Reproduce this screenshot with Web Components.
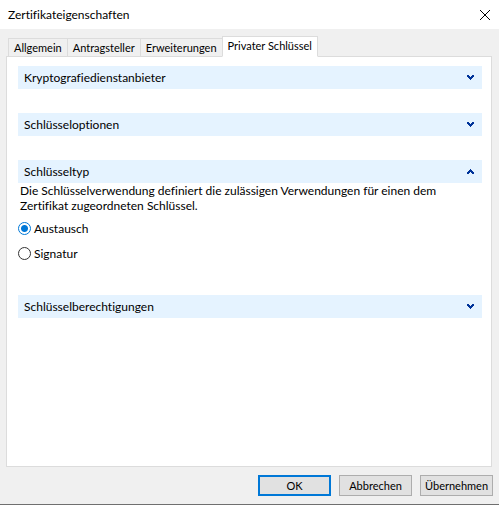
<!DOCTYPE html>
<html lang="de">
<head>
<meta charset="utf-8">
<title>Zertifikateigenschaften</title>
<style>
    html, body {
        height: 100%;
        margin: 0;
    }
    body {
        color: #000;
        box-sizing: border-box;
        padding-bottom: 1px;
        font: 12px/15px Lato, "Open Sans", sans-serif;
        font-variant-ligatures: none;
    }
</style>
</head>
<body>

<x-dialog heading="Zertifikateigenschaften">
    <x-tabs>
        <x-tab>Allgemein</x-tab>
        <x-tab>Antragsteller</x-tab>
        <x-tab>Erweiterungen</x-tab>
        <x-tab selected>Privater Schlüssel</x-tab>
        <x-section slot="panel" heading="Kryptografiedienstanbieter"></x-section>
        <x-section slot="panel" heading="Schlüsseloptionen"></x-section>
        <x-section slot="panel" heading="Schlüsseltyp" open>
            <x-key-type></x-key-type>
        </x-section>
        <x-section slot="panel" heading="Schlüsselberechtigungen"></x-section>
    </x-tabs>
    <x-button slot="actions" primary>OK</x-button>
    <x-button slot="actions">Abbrechen</x-button>
    <x-button slot="actions">Übernehmen</x-button>
</x-dialog>

<script>
class XDialog extends HTMLElement {

    #shadow = /*html*/ `
    <style>
        :host {
            height: 100%;
            display: flex;
            box-sizing: border-box;
            flex-direction: column;
            background: #f0f0f0;
            border-bottom: 1px solid #6f6f6f;
        }
        header {
            display: flex;
            height: 29px;
            flex: none;
            padding: 0 8px;
            background: #fff;
            align-items: center;
            justify-content: space-between;
        }
        h1 {
            margin: 0;
            font-size: inherit;
            font-weight: inherit;
        }
        header button {
            width: 12px;
            height: 12px;
            padding: 0;
            border: 0;
            display: flex;
            align-items: center;
            justify-content: center;
            background: none;
        }
        main {
            flex: 1;
            display: flex;
            min-height: 0;
            padding: 7px 7px 0 6px;
        }
        footer {
            display: flex;
            gap: 8px;
            padding: 8px 6px;
            justify-content: flex-end;
        }
    </style>
    <header>
        <h1></h1>
        <button type="button" aria-label="Schließen">
            <svg width="12" height="12" viewBox="0 0 12 12" fill="none" stroke="#000">
                <path d="M1 1l10 10M11 1L1 11"/>
            </svg>
        </button>
    </header>
    <main><slot></slot></main>
    <footer><slot name="actions"></slot></footer>
    `;

    constructor() {
        super();
        this.attachShadow({ mode: 'open' });
        this.shadowRoot.innerHTML = this.#shadow;
    }

    connectedCallback() {
        this.shadowRoot.querySelector('h1').textContent = this.getAttribute('heading');
    }

}

class XTabs extends HTMLElement {

    #shadow = /*html*/ `
    <style>
        :host {
            flex: 1;
            display: flex;
            flex-direction: column;
        }
        .tabs {
            display: flex;
            height: 21px;
            padding-left: 2px;
            margin-bottom: -1px;
            align-items: flex-end;
        }
        .panel {
            flex: 1;
            display: flex;
            gap: 24px;
            padding: 9px 9px 9px 11px;
            flex-direction: column;
            border: 1px solid #dcdcdc;
            background: #fff;
        }
    </style>
    <div class="tabs" role="tablist"><slot></slot></div>
    <div class="panel" role="tabpanel"><slot name="panel"></slot></div>
    `;

    constructor() {
        super();
        this.attachShadow({ mode: 'open' });
        this.shadowRoot.innerHTML = this.#shadow;
    }

}

class XTab extends HTMLElement {

    #shadow = /*html*/ `
    <style>
        :host {
            display: block;
            margin-right: -1px;
        }
        button {
            height: 19px;
            display: block;
            padding: 0 5px;
            color: inherit;
            white-space: nowrap;
            border: 1px solid #dcdcdc;
            background: #f0f0f0;
            font: 11px/15px Lato, sans-serif;
        }
        :host([selected]) {
            z-index: 1;
            position: relative;
        }
        :host([selected]) button {
            height: 21px;
            padding-bottom: 2px;
            background: #fff;
            border-bottom-color: #fff;
        }
    </style>
    <button type="button" role="tab"><slot></slot></button>
    `;

    constructor() {
        super();
        this.attachShadow({ mode: 'open' });
        this.shadowRoot.innerHTML = this.#shadow;
    }

    connectedCallback() {
        this.shadowRoot.querySelector('button').setAttribute('aria-selected', this.hasAttribute('selected'));
    }

}

class XSection extends HTMLElement {

    #shadow = /*html*/ `
    <style>
        :host {
            display: block;
        }
        button {
            width: 100%;
            height: 23px;
            display: flex;
            border: 0;
            padding: 0 8px 0 6px;
            font: inherit;
            font-variant-ligatures: none;
            color: inherit;
            align-items: center;
            justify-content: space-between;
            background: #e5f3ff;
        }
        :host([open]) svg {
            transform: scaleY(-1);
        }
        :host(:not([open])) .body {
            display: none;
        }
    </style>
    <button type="button">
        <span></span>
        <svg width="7" height="5" viewBox="0 0 7 5" fill="#003399" shape-rendering="crispEdges">
            <path d="M0 0h2v1h1v1h1v-1h1v-1h2v2h-1v1h-1v1h-1v1h-1v-1h-1v-1h-1v-1h-1z"/>
        </svg>
    </button>
    <div class="body"><slot></slot></div>
    `;

    constructor() {
        super();
        this.attachShadow({ mode: 'open' });
        this.shadowRoot.innerHTML = this.#shadow;
        this.shadowRoot.querySelector('button').addEventListener('click', () => this.toggle());
    }

    connectedCallback() {
        this.shadowRoot.querySelector('span').textContent = this.getAttribute('heading');
        this.update();
    }

    toggle() {
        this.toggleAttribute('open');
        this.update();
    }

    update() {
        this.shadowRoot.querySelector('button').setAttribute('aria-expanded', this.hasAttribute('open'));
    }

}

class XKeyType extends HTMLElement {

    #shadow = /*html*/ `
    <style>
        :host {
            display: block;
            padding-bottom: 10px;
        }
        p {
            margin: 0 32px 0 2px;
        }
        label {
            display: flex;
            gap: 3px;
            height: 15px;
            margin-top: 10px;
            align-items: center;
        }
        p + label {
            margin-top: 8px;
        }
        input {
            width: 13px;
            height: 13px;
            margin: 0;
            flex: none;
            appearance: none;
            border-radius: 50%;
            border: 1px solid #333;
            background: #fff;
        }
        input:checked {
            border-color: #0078d7;
            background: radial-gradient(circle, #0078d7 3px, #fff 4px);
        }
    </style>
    <p>Die Schlüsselverwendung definiert die zulässigen Verwendungen für einen dem Zertifikat zugeordneten Schlüssel.</p>
    <label><input type="radio" name="type" value="exchange" checked>Austausch</label>
    <label><input type="radio" name="type" value="signature">Signatur</label>
    `;

    constructor() {
        super();
        this.attachShadow({ mode: 'open' });
        this.shadowRoot.innerHTML = this.#shadow;
    }

}

class XButton extends HTMLElement {

    #shadow = /*html*/ `
    <style>
        :host {
            display: block;
        }
        button {
            width: 73px;
            height: 21px;
            padding: 0;
            display: block;
            color: inherit;
            border: 1px solid #adadad;
            background: #e1e1e1;
            font: 11px/15px Lato, sans-serif;
        }
        :host([primary]) button {
            border: 2px solid #0078d7;
        }
    </style>
    <button type="button"><slot></slot></button>
    `;

    constructor() {
        super();
        this.attachShadow({ mode: 'open' });
        this.shadowRoot.innerHTML = this.#shadow;
    }

}

customElements.define('x-dialog', XDialog);
customElements.define('x-tabs', XTabs);
customElements.define('x-tab', XTab);
customElements.define('x-section', XSection);
customElements.define('x-key-type', XKeyType);
customElements.define('x-button', XButton);
</script>
</body>
</html>
